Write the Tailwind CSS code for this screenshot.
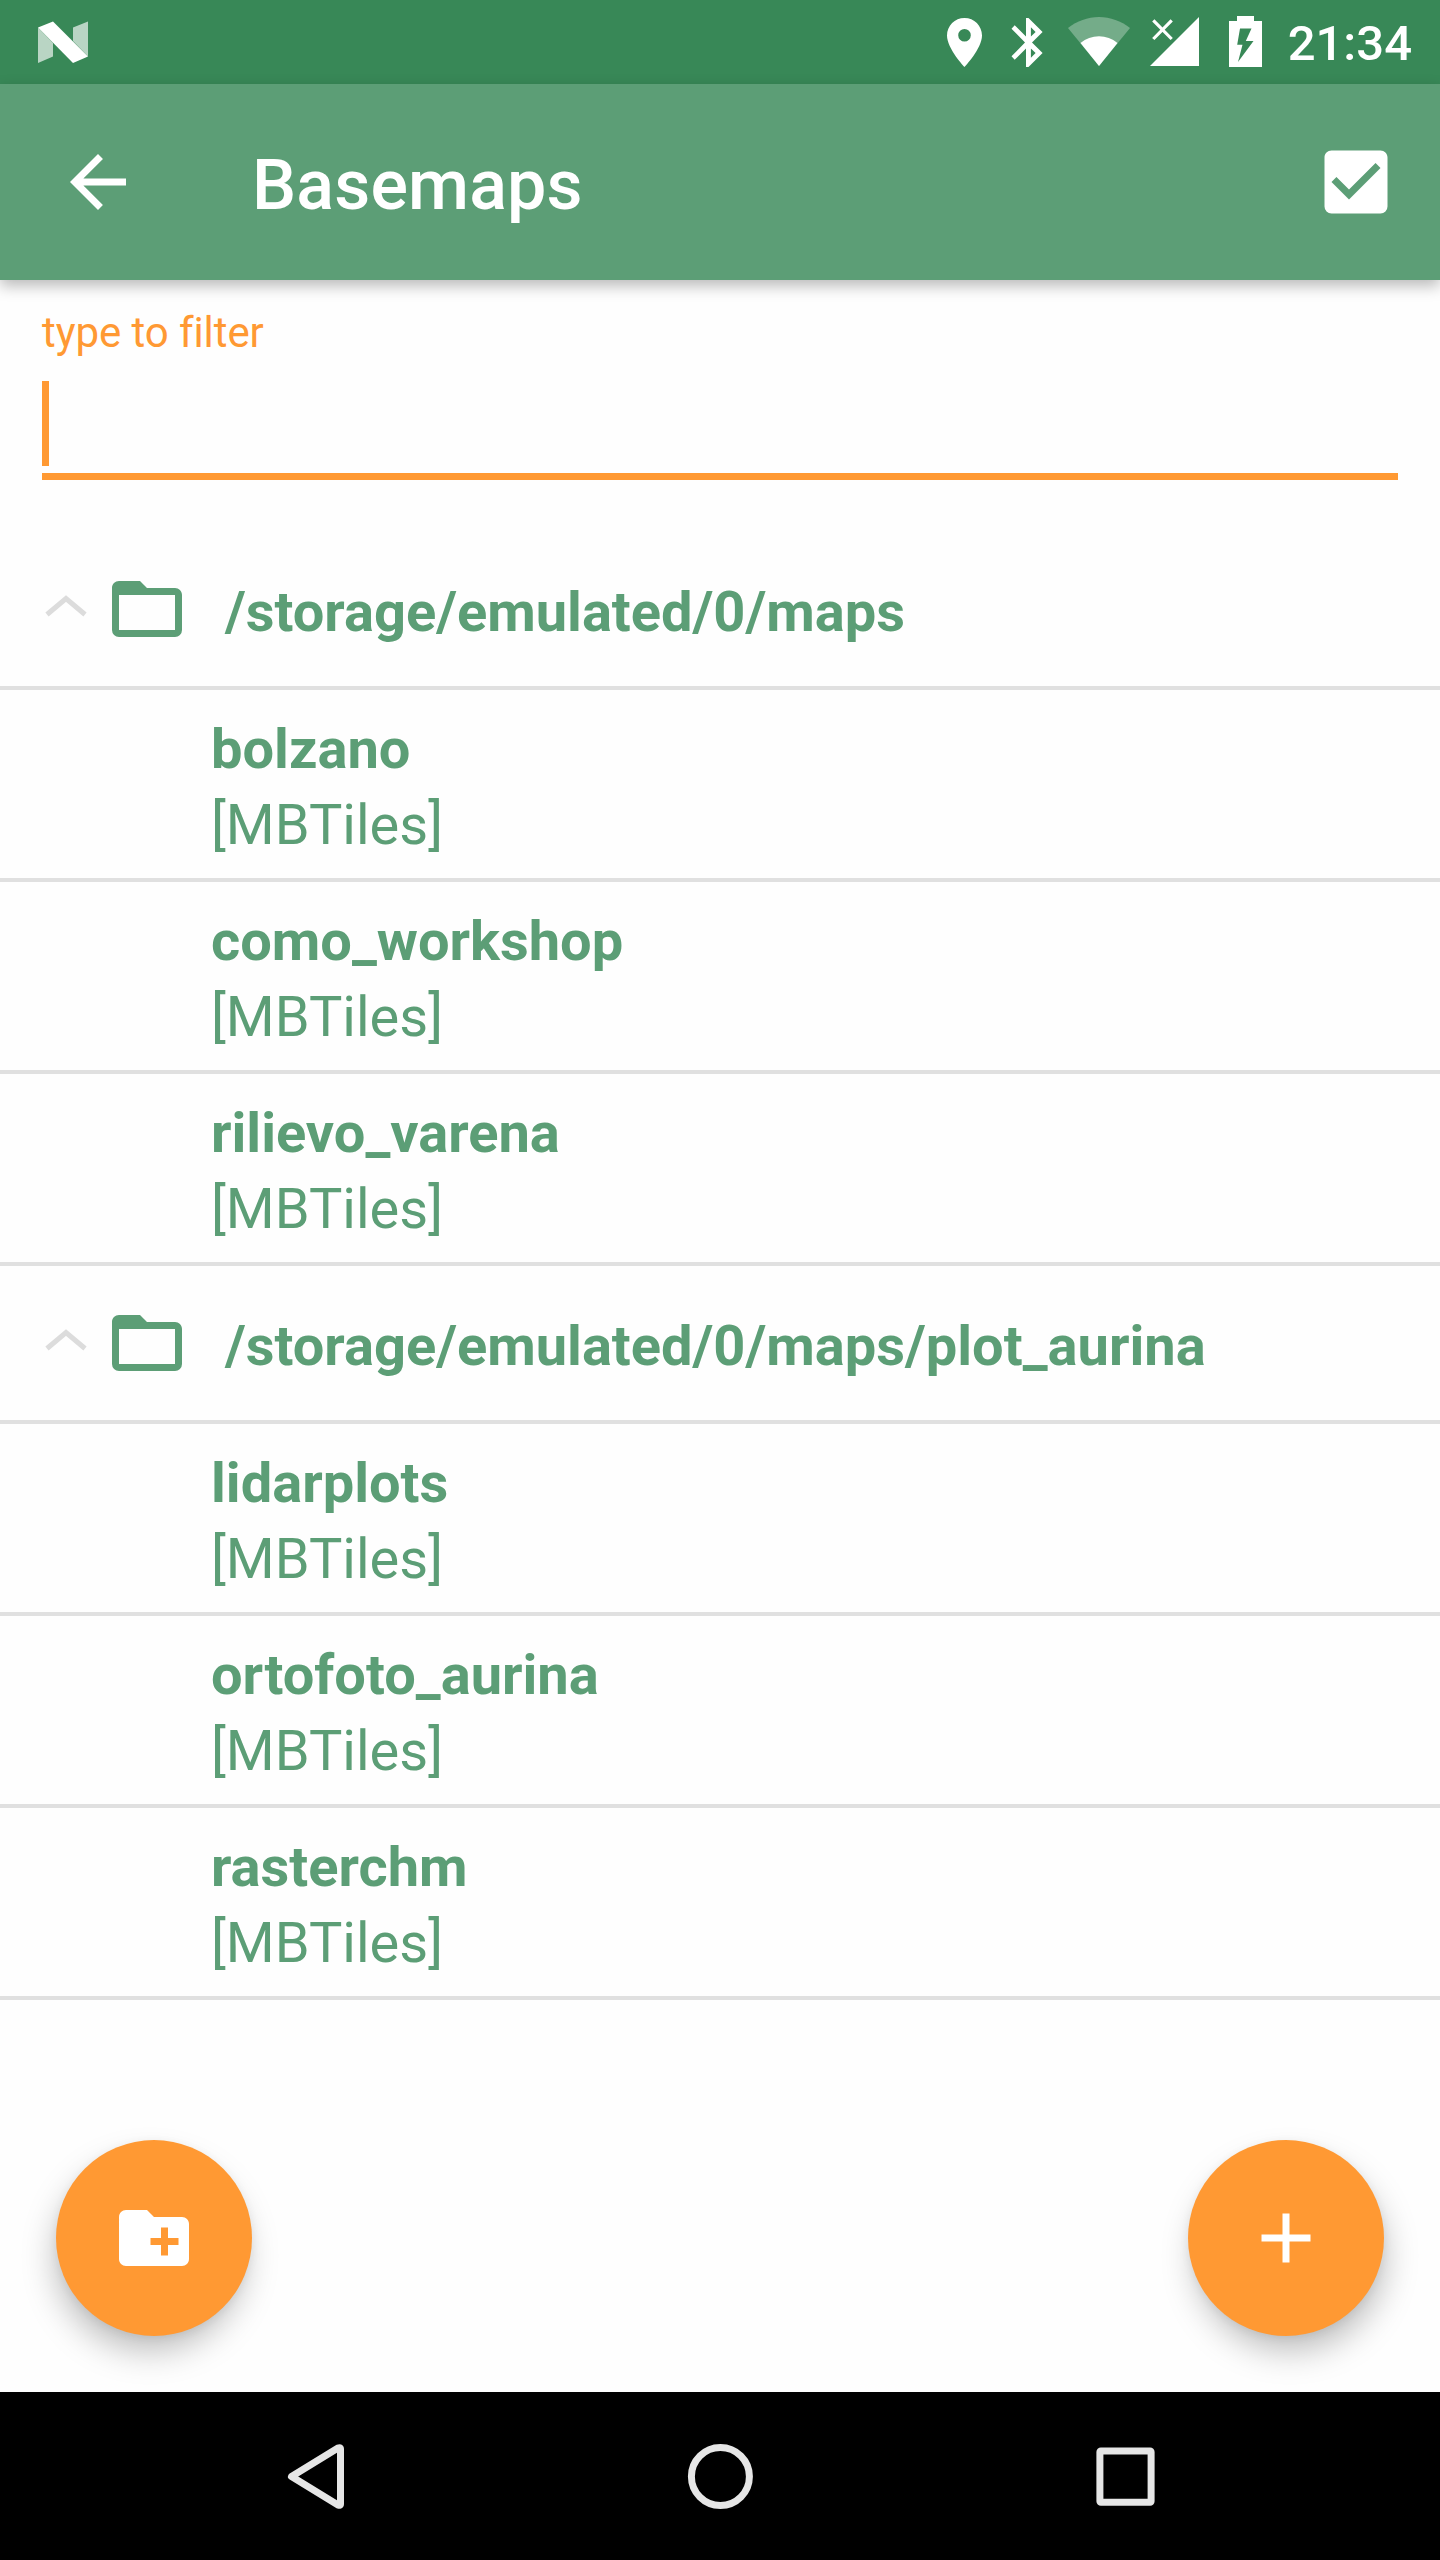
<!DOCTYPE html>
<html lang="en">
<head>
<meta charset="utf-8">
<title>Basemaps</title>
<script src="https://cdn.jsdelivr.net/npm/@tailwindcss/browser@4"></script>
</head>
<body class="bg-white">
<div class="relative flex h-[2560px] w-[1440px] flex-col overflow-hidden bg-[#fefefe] font-['Roboto',sans-serif] text-[#5c9e76]">

  <!-- Status bar -->
  <div class="flex h-[84px] shrink-0 items-center justify-between bg-[#388857] pl-[38px] pr-[28px] text-white">
    <svg class="h-[42px] w-[50px]" viewBox="0 0 50 42" fill="#fff">
      <path d="M0 6.5 15 22V35.500L0 42Z" fill-opacity=".65"/>
      <path d="M35 6.500 50 .5V35.500L35 20Z" fill-opacity=".65"/>
      <path d="M0 6.500 15 .5 50 35.500 35 42Z"/>
    </svg>
    <div class="flex h-full items-center">
      <svg class="h-[84px] w-[330px]" viewBox="940 0 330 84" fill="#fff">
        <path fill-rule="evenodd" d="M964.500 18C954.800 18 947 25.800 947 35.500 947 48.500 964.500 67 964.500 67S982 48.500 982 35.500C982 25.800 974.200 18 964.500 18ZM964.500 41.500A6.300 6.300 0 1 1 964.500 28.900 6.300 6.300 0 0 1 964.500 41.500Z"/>
        <path fill-rule="evenodd" d="M1042.600 31.900 1028.500 18H1026V36.600L1014.700 25.300 1011.500 28.700 1025 42.500 1011.500 56.300 1014.700 59.700 1026 48.400V67H1028.500L1042.600 53.100 1032 42.500ZM1030.900 27.200 1035.600 31.900 1030.900 36.600ZM1035.600 53.100 1030.900 57.800V48.400Z"/>
        <path fill-opacity=".3" d="M1099 66 1068 28C1077 21 1087.500 17 1099 17S1121 21 1130 28Z"/>
        <path d="M1099 66 1080.500 43C1086 38.500 1092 36.300 1099 36.300S1112 38.500 1117.500 43Z"/>
        <path d="M1150 66H1199V17Z"/>
        <path d="M1153.300 20.300 1171.700 39M1171.700 20.300 1153.300 39" stroke="#fff" stroke-width="3.200"/>
        <path fill-rule="evenodd" d="M1237 16H1254V21H1262V67H1229V21H1237ZM1240 28.500 1237.200 44.800H1242.500L1238 62 1253.500 41H1245.800L1251.500 28.500Z"/>
      </svg>
      <span class="mt-[3px] ml-[18px] text-[49px] leading-none font-medium">21:34</span>
    </div>
  </div>

  <!-- App bar -->
  <header class="z-10 flex h-[196px] shrink-0 items-center bg-[#5c9e76] pl-14 pr-[42px] text-white shadow-[0_6px_14px_rgba(0,0,0,0.27)]">
    <svg class="size-[84px]" viewBox="0 0 24 24" fill="currentColor"><path d="M20 11H7.830l5.590-5.590L12 4l-8 8 8 8 1.410-1.410L7.830 13H20v-2z"/></svg>
    <h1 class="mt-1.5 ml-28 grow text-[70px] leading-none font-medium tracking-[0.15px]">Basemaps</h1>
    <svg class="size-[84px]" viewBox="0 0 24 24" fill="currentColor"><path d="M10,17L5,12L6.410,10.580L10,14.170L17.590,6.580L19,8M19,3H5C3.890,3 3,3.890 3,5V19A2,2 0 0,0 5,21H19A2,2 0 0,0 21,19V5C21,3.890 20.100,3 19,3Z"/></svg>
  </header>

  <!-- Filter field -->
  <div class="mx-[42px] flex h-[200px] shrink-0 flex-col border-b-[7px] border-[#ff9933] pt-7">
    <label class="text-[42px] leading-[49px] tracking-[-0.08px] text-[#ff9933]">type to filter</label>
    <div class="mt-6 h-[85px] w-[7px] bg-[#ff9933]"></div>
  </div>

  <!-- Folder tree -->
  <main class="flex grow flex-col pt-[52px] text-[56px] leading-[76px]">
    <section>
      <div class="flex h-[158px] items-center border-b-4 border-[#e0e0e0] pl-[45px] font-bold">
        <svg class="mb-1.5 h-[24px] w-[42px]" viewBox="0 0 42 24" fill="none" stroke="#dcdcdc" stroke-width="5"><path d="M2 20.500 21 4.500 40 20.500"/></svg>
        <svg class="ml-[18px] size-[84px]" viewBox="0 0 24 24" fill="currentColor"><path d="M20,18H4V8H20M20,6H12L10,4H4C2.890,4 2,4.890 2,6V18A2,2 0 0,0 4,20H20A2,2 0 0,0 22,18V8C22,6.890 21.100,6 20,6Z"/></svg>
        <span class="mt-1.5 ml-[36px]">/storage/emulated/0/maps</span>
      </div>
      <div class="flex h-48 flex-col justify-center border-b-4 border-[#e0e0e0] pt-1.5 pl-[211px]"><b>bolzano</b><span>[MBTiles]</span></div>
      <div class="flex h-48 flex-col justify-center border-b-4 border-[#e0e0e0] pt-1.5 pl-[211px]"><b>como_workshop</b><span>[MBTiles]</span></div>
      <div class="flex h-48 flex-col justify-center border-b-4 border-[#e0e0e0] pt-1.5 pl-[211px]"><b>rilievo_varena</b><span>[MBTiles]</span></div>
    </section>
    <section>
      <div class="flex h-[158px] items-center border-b-4 border-[#e0e0e0] pl-[45px] font-bold">
        <svg class="mb-1.5 h-[24px] w-[42px]" viewBox="0 0 42 24" fill="none" stroke="#dcdcdc" stroke-width="5"><path d="M2 20.500 21 4.500 40 20.500"/></svg>
        <svg class="ml-[18px] size-[84px]" viewBox="0 0 24 24" fill="currentColor"><path d="M20,18H4V8H20M20,6H12L10,4H4C2.890,4 2,4.890 2,6V18A2,2 0 0,0 4,20H20A2,2 0 0,0 22,18V8C22,6.890 21.100,6 20,6Z"/></svg>
        <span class="mt-1.5 ml-[36px]">/storage/emulated/0/maps/plot_aurina</span>
      </div>
      <div class="flex h-48 flex-col justify-center border-b-4 border-[#e0e0e0] pt-1.5 pl-[211px]"><b>lidarplots</b><span>[MBTiles]</span></div>
      <div class="flex h-48 flex-col justify-center border-b-4 border-[#e0e0e0] pt-1.5 pl-[211px]"><b>ortofoto_aurina</b><span>[MBTiles]</span></div>
      <div class="flex h-48 flex-col justify-center border-b-4 border-[#e0e0e0] pt-1.5 pl-[211px]"><b>rasterchm</b><span>[MBTiles]</span></div>
    </section>
  </main>

  <!-- Floating buttons -->
  <div class="flex h-[252px] shrink-0 items-start justify-between px-14">
    <button class="flex size-[196px] items-center justify-center rounded-full bg-[#ff9933] text-white shadow-[-4px_18px_34px_-4px_rgba(0,0,0,0.27),0_2px_10px_rgba(0,0,0,0.06)]">
      <svg class="size-[84px]" viewBox="0 0 24 24" fill="currentColor"><path d="M20 6h-8l-2-2H4c-1.110 0-1.990.890-1.990 2L2 18c0 1.110.890 2 2 2h16c1.110 0 2-.890 2-2V8c0-1.110-.890-2-2-2zm-1 8h-3v3h-2v-3h-3v-2h3V9h2v3h3v2z"/></svg>
    </button>
    <button class="flex size-[196px] items-center justify-center rounded-full bg-[#ff9933] text-white shadow-[4px_18px_34px_-4px_rgba(0,0,0,0.27),0_2px_10px_rgba(0,0,0,0.06)]">
      <svg class="size-[84px]" viewBox="0 0 24 24" fill="currentColor"><path d="M19 13h-6v6h-2v-6H5v-2h6V5h2v6h6v2z"/></svg>
    </button>
  </div>

  <!-- Navigation bar -->
  <nav class="h-[168px] shrink-0 bg-black">
    <svg class="h-[168px] w-[1440px]" viewBox="0 0 1440 168" fill="none" stroke="#e6e6e6" stroke-width="7" stroke-linejoin="round">
      <path d="M291.500 84.500 338 56Q340.500 55 340.500 57V112Q340.500 114 338 113Z"/>
      <circle cx="720.400" cy="84.500" r="29"/>
      <rect x="1099.900" y="59" width="51.200" height="51.200" rx="1"/>
    </svg>
  </nav>
</div>
</body>
</html>
